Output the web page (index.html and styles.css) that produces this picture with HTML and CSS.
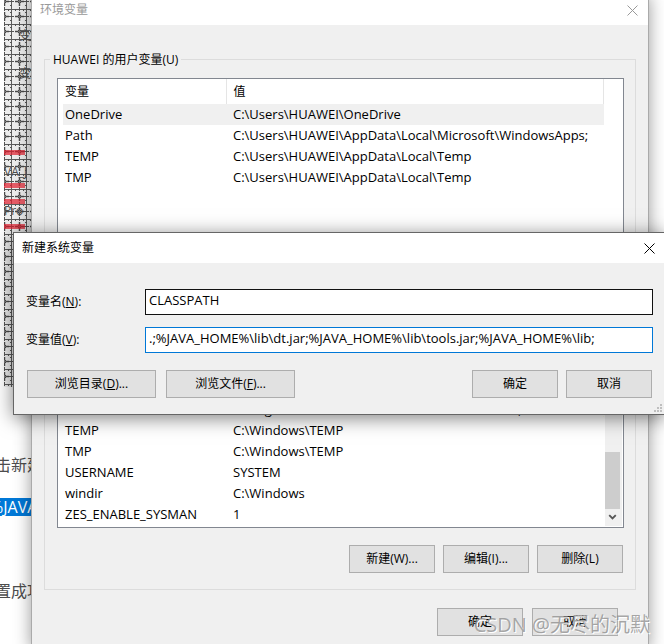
FILE: index.html
```html
<!DOCTYPE html>
<html lang="zh-CN">
<head>
<meta charset="utf-8">
<title>环境变量</title>
<link rel="stylesheet" href="styles.css">
</head>
<body>
<main class="desktop">
  <article class="page">
    <div class="figure">
      <svg class="pattern" aria-hidden="true">
        <defs>
          <pattern id="mesh" x="8" y="9" width="15" height="15" patternUnits="userSpaceOnUse">
            <path d="M14.500 0V15M0 .5H15" stroke="#5c5c5c" fill="none"/>
            <path d="M12 7.500H15M0 7.500H2M7.500 0V2M7.500 13V15M3.500 0V2M11.500 0V2M13 3.500H15M13 11.500H15" stroke="#555" fill="none"/>
            <path d="M7.500 3V6M7.500 9V12M3 7.500H6M9 7.500H12" stroke="#484848" stroke-width="1.500" fill="none"/>
            <path d="M7.500 5.500L9.500 7.500L7.500 9.500L5.500 7.500Z" stroke="#484848" fill="#777"/>
          </pattern>
        </defs>
        <rect width="100%" height="100%" fill="url(#mesh)"/>
      </svg>
      <span class="mark mark-a">变</span>
      <span class="mark mark-b">变</span>
      <i class="bar bar-a"></i>
      <span class="mark mark-c">VA_J</span>
      <i class="bar bar-b"></i>
      <i class="bar bar-c"></i>
      <span class="mark mark-d">Pro</span>
      <i class="bar bar-d"></i>
    </div>
    <p>击新建</p>
    <p><mark>%JAVA</mark></p>
    <p class="last">置成功</p>
  </article>

  <section class="window env" aria-label="环境变量">
    <header class="titlebar">
      <h1>环境变量</h1>
      <button class="close" aria-label="关闭"><svg viewBox="0 0 11 11"><path d="M.5 .5L10.500 10.500M10.500 .5L.5 10.500"/></svg></button>
    </header>
    <div class="content">
      <fieldset class="group user">
        <legend>HUAWEI 的用户变量(U)</legend>
        <div class="list">
          <table>
            <thead><tr><th class="name">变量</th><th>值</th></tr></thead>
            <tbody>
              <tr class="selected"><td>OneDrive</td><td>C:\Users\HUAWEI\OneDrive</td></tr>
              <tr><td>Path</td><td>C:\Users\HUAWEI\AppData\Local\Microsoft\WindowsApps;</td></tr>
              <tr><td>TEMP</td><td>C:\Users\HUAWEI\AppData\Local\Temp</td></tr>
              <tr><td>TMP</td><td>C:\Users\HUAWEI\AppData\Local\Temp</td></tr>
            </tbody>
          </table>
        </div>
      </fieldset>
      <fieldset class="group system" aria-label="系统变量">
        <div class="list">
          <table>
            <tbody>
              <tr><td class="name">PSModulePath</td><td>%ProgramFiles%\WindowsPowerShell\Modules;C:\Windows\sy...</td></tr>
              <tr><td>TEMP</td><td>C:\Windows\TEMP</td></tr>
              <tr><td>TMP</td><td>C:\Windows\TEMP</td></tr>
              <tr><td>USERNAME</td><td>SYSTEM</td></tr>
              <tr><td>windir</td><td>C:\Windows</td></tr>
              <tr><td>ZES_ENABLE_SYSMAN</td><td>1</td></tr>
            </tbody>
          </table>
          <div class="scrollbar">
            <div class="thumb"></div>
            <svg viewBox="0 0 16 16"><path d="M4.500 5.500L8 9L11.500 5.500"/></svg>
          </div>
        </div>
        <div class="actions">
          <button class="btn">新建(W)...</button>
          <button class="btn">编辑(I)...</button>
          <button class="btn">删除(L)</button>
        </div>
      </fieldset>
      <div class="actions confirm">
        <button class="btn">确定</button>
        <button class="btn">取消</button>
      </div>
    </div>
  </section>

  <section class="window dialog" role="dialog" aria-label="新建系统变量">
    <header class="titlebar">
      <h2>新建系统变量</h2>
      <button class="close" aria-label="关闭"><svg viewBox="0 0 11 11"><path d="M.5 .5L10.500 10.500M10.500 .5L.5 10.500"/></svg></button>
    </header>
    <form class="form">
      <div class="field">
        <label for="name">变量名(<u>N</u>):</label>
        <input id="name" type="text" value="CLASSPATH">
      </div>
      <div class="field">
        <label for="value">变量值(<u>V</u>):</label>
        <input id="value" class="active" type="text" value=".;%JAVA_HOME%\lib\dt.jar;%JAVA_HOME%\lib\tools.jar;%JAVA_HOME%\lib;">
      </div>
      <div class="buttons">
        <button type="button" class="btn wide">浏览目录(<u>D</u>)...</button>
        <button type="button" class="btn wide">浏览文件(<u>F</u>)...</button>
        <span class="spacer"></span>
        <button type="button" class="btn">确定</button>
        <button type="button" class="btn">取消</button>
      </div>
    </form>
    <svg class="grip" viewBox="0 0 8 8" aria-hidden="true"><path d="M6 0h2v2H6zM3 3h2v2H3zM6 3h2v2H6zM0 6h2v2H0zM3 6h2v2H3zM6 6h2v2H6z"/></svg>
  </section>
  <div class="watermark">CSDN @无尽的沉默</div>
</main>
</body>
</html>
```

FILE: styles.css
```css
* { box-sizing: border-box; }
body {
  margin: 0;
  background: #fff;
  color: #000;
  font: 12px/21px "Open Sans", "Noto Sans CJK SC", sans-serif;
}
button, input { font: inherit; color: inherit; }
h1, h2, p { margin: 0; font-size: inherit; font-weight: normal; }
.desktop { position: relative; min-height: 100vh; overflow: hidden; }

.page { color: #4d4d4d; font-size: 16px; line-height: 24px; white-space: nowrap; }
.page p { margin: 0 0 18px -5px; }
.page mark { display: inline-block; margin-left: -5px; line-height: 18px; background: #0078d7; color: #fff; }
.page .last { padding-top: 42px; }
.figure { position: relative; width: 28px; height: 387px; margin: 0 0 66px 4px; overflow: hidden; background: #ededed; }
.pattern { position: absolute; inset: 0; width: 100%; height: 100%; }
.mark { position: absolute; left: 15px; font-size: 12px; }
.mark-a { top: 24px; }
.mark-b { top: 62px; }
.mark-c { top: 160px; left: 0; }
.mark-d { top: 199px; left: 0; }
.bar { position: absolute; left: 0; width: 21px; height: 5px; background: rgba(225, 30, 45, .7); }
.bar-a { top: 150px; }
.bar-b { top: 183px; }
.bar-c { top: 199px; }
.bar-d { top: 224px; }

.window { position: absolute; background: #f0f0f0; }
.titlebar { display: flex; justify-content: space-between; align-items: center; background: #fff; }
.titlebar h1, .titlebar h2 { padding-bottom: 2px; }
.close { width: 31px; height: 30px; padding: 9px 10px; border: 0; background: none; }
.close svg { display: block; width: 11px; height: 11px; }
.close path { stroke: currentColor; fill: none; }

.env { top: -6px; bottom: -4px; left: 31px; right: 15px; border: 1px solid #aaa; box-shadow: 0 2px 16px rgba(0, 0, 0, .4); }
.env .titlebar { height: 30px; padding-left: 8px; color: #999; }
.content { padding: 24px 12px; }
.group { min-width: 0; margin: 0; padding: 8px 11px 0 12px; border: 1px solid #dcdcdc; }
.group legend { padding: 0 3px; margin-left: -7px; }
.user { height: 275px; }
.system { height: 256px; margin-top: 10px; padding-top: 63px; }
.list { display: flex; height: 190px; padding: 0 1px 1px 5px; border: 1px solid #828790; background: #fff; overflow: hidden; font-size: 13px; }
.system .list { height: 130px; }
table { flex: none; width: calc(100% - 18px); height: max-content; border-collapse: collapse; table-layout: fixed; }
th, td { height: 21px; padding: 0 0 0 7px; text-align: left; font-weight: normal; white-space: nowrap; overflow: hidden; }
th { height: 25px; border-right: 1px solid #e5e5e5; font-size: 12px; }
.name { width: 163px; }
td:first-child, th:first-child { padding-left: 2px; }
.selected { background: #f0f0f0; }
.scrollbar { display: flex; flex: none; flex-direction: column; justify-content: flex-end; width: 17px; margin-left: auto; background: #f0f0f0; }
.thumb { width: 15px; height: 57px; background: #cdcdcd; }
.scrollbar svg { width: 15px; height: 17px; }
.scrollbar path { stroke: #555; stroke-width: 2; fill: none; }
.actions { display: flex; justify-content: flex-end; gap: 8px; margin: 17px 1px 0 0; }
.confirm { gap: 9px; margin: 18px 18px 0 0; }
.btn { width: 86px; height: 28px; padding: 0; border: 1px solid #adadad; background: #e1e1e1; line-height: 26px; }
.wide { width: 129px; }

.dialog { top: 232px; left: 13px; right: -1px; border: 1px solid #666; box-shadow: 0 3px 18px rgba(0, 0, 0, .5); }
.dialog .titlebar { height: 30px; padding-left: 8px; }
.dialog .close { width: 30px; }
.form { padding: 26px 11px 16px 12px; }
.field { display: flex; align-items: center; margin-bottom: 12px; }
.field label { width: 119px; padding-bottom: 2px; }
.field input { flex: 1; height: 26px; min-width: 0; padding: 0 4px 4px 3px; border: 1px solid #111; background: #fff; outline: 0; font-size: 13px; }
.field .active { border-color: #0078d7; }
.buttons { display: flex; gap: 8px; margin-top: 17px; padding: 0 1px; }
.wide + .wide { margin-left: 2px; }
.spacer { flex: 1; }
.grip { position: absolute; right: 2px; bottom: 2px; width: 8px; height: 8px; fill: #bfbfbf; }

.watermark { position: absolute; right: 14px; bottom: 5px; color: rgba(140, 140, 140, .75); font-size: 20px; line-height: 28px; text-shadow: 1px 1px 0 #fff; }
```
